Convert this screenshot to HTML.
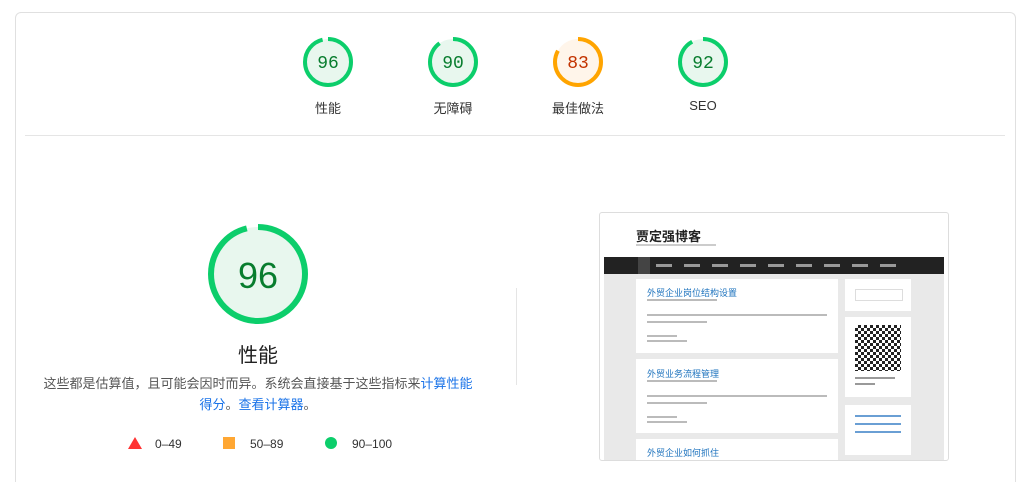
<!DOCTYPE html><html><head><meta charset="utf-8"><style>
html,body{margin:0;width:1024px;height:482px;overflow:hidden}
body{background:#fff;font-family:"Liberation Sans","Noto Sans CJK SC",sans-serif;position:relative}
.card{position:absolute;left:15px;top:12px;width:999px;height:480px;border:1px solid #e0e0e0;border-bottom:none;border-radius:6px 6px 0 0}
.lbl{position:absolute;font-size:13px;color:#333;width:100px;text-align:center}
.a{position:absolute}
.sc{position:absolute;background:#fff}
</style></head><body>
<div class="card"></div>
<svg class="a" style="left:0;top:0" width="1024" height="482">
<g font-family="Liberation Mono, monospace" font-size="18" text-anchor="middle">
<circle cx="328" cy="62" r="23" fill="#e8f7ee" stroke="#0cce6b" stroke-width="4" stroke-dasharray="138.8 144.5" transform="rotate(-90 328 62)"/>
<text x="328" y="68" fill="#087d2e">96</text>
<circle cx="453" cy="62" r="23" fill="#e8f7ee" stroke="#0cce6b" stroke-width="4" stroke-dasharray="130 144.5" transform="rotate(-90 453 62)"/>
<text x="453" y="68" fill="#087d2e">90</text>
<circle cx="578" cy="62" r="23" fill="#fff5ea" stroke="#ffa400" stroke-width="4" stroke-dasharray="120 144.5" transform="rotate(-90 578 62)"/>
<text x="578" y="68" fill="#c33300">83</text>
<circle cx="703" cy="62" r="23" fill="#e8f7ee" stroke="#0cce6b" stroke-width="4" stroke-dasharray="133 144.5" transform="rotate(-90 703 62)"/>
<text x="703" y="68" fill="#087d2e">92</text>
</g>
<line x1="25" y1="135.5" x2="1005" y2="135.5" stroke="#e5e5e5"/>
<circle cx="258" cy="274" r="47" fill="#e8f7ee" stroke="#0cce6b" stroke-width="6" stroke-dasharray="283.5 295.3" transform="rotate(-90 258 274)"/>
<text x="258" y="288" font-family="Liberation Sans, sans-serif" font-size="36" fill="#087d2e" text-anchor="middle">96</text>
<line x1="516.5" y1="288" x2="516.5" y2="385" stroke="#e5e5e5"/>
<polygon points="135,437 142,449 128,449" fill="#f33"/>
<rect x="223" y="437" width="12" height="12" fill="#ffa733"/>
<circle cx="331" cy="443" r="6" fill="#0cce6b"/>
<g font-size="12" fill="#333"><text x="155" y="448">0–49</text><text x="250" y="448">50–89</text><text x="352" y="448">90–100</text></g>
</svg>
<div class="lbl" style="left:278px;top:98px">性能</div>
<div class="lbl" style="left:403px;top:98px">无障碍</div>
<div class="lbl" style="left:528px;top:98px">最佳做法</div>
<div class="lbl" style="left:653px;top:98px">SEO</div>
<div class="a" style="left:158px;top:339px;width:200px;text-align:center;font-size:20px;color:#212121">性能</div>
<div class="a" style="left:40px;top:373px;width:436px;text-align:center;font-size:13px;line-height:21px;color:#555">这些都是估算值，且可能会因时而异。系统会直接基于这些指标来<span style="color:#1a73e8">计算性能得分</span>。<span style="color:#1a73e8">查看计算器</span>。</div>
<div class="a" style="left:599px;top:212px;width:348px;height:247px;border:1px solid #ddd;border-radius:3px;overflow:hidden;background:#fff">
 <div class="a" style="left:36px;top:13px;font-size:13px;font-weight:bold;color:#222">贾定强博客</div>
 <div class="a" style="left:36px;top:31px;width:80px;height:2px;background:#ccc"></div>
 <div class="a" style="left:4px;top:44px;width:340px;height:17px;background:#222"></div>
 <div class="a" style="left:38px;top:44px;width:12px;height:17px;background:#444"></div>
 <div class="a" style="left:56px;top:51px;width:240px;height:3px;background:repeating-linear-gradient(90deg,#999 0 16px,transparent 16px 28px)"></div>
 <div class="a" style="left:4px;top:61px;width:340px;height:190px;background:#e9e9e9"></div>
 <div class="sc" style="left:36px;top:66px;width:202px;height:74px"></div>
 <div class="a" style="left:47px;top:73px;font-size:9px;color:#1e73be">外贸企业岗位结构设置</div>
 <div class="a" style="left:47px;top:86px;width:70px;height:2px;background:#bbb"></div>
 <div class="a" style="left:47px;top:101px;width:180px;height:2px;background:#bbb"></div>
 <div class="a" style="left:47px;top:108px;width:60px;height:2px;background:#bbb"></div>
 <div class="a" style="left:47px;top:122px;width:30px;height:2px;background:#bbb"></div>
 <div class="a" style="left:47px;top:127px;width:40px;height:2px;background:#bbb"></div>
 <div class="sc" style="left:36px;top:146px;width:202px;height:74px"></div>
 <div class="a" style="left:47px;top:154px;font-size:9px;color:#1e73be">外贸业务流程管理</div>
 <div class="a" style="left:47px;top:167px;width:70px;height:2px;background:#bbb"></div>
 <div class="a" style="left:47px;top:182px;width:180px;height:2px;background:#bbb"></div>
 <div class="a" style="left:47px;top:189px;width:60px;height:2px;background:#bbb"></div>
 <div class="a" style="left:47px;top:203px;width:30px;height:2px;background:#bbb"></div>
 <div class="a" style="left:47px;top:208px;width:40px;height:2px;background:#bbb"></div>
 <div class="sc" style="left:36px;top:226px;width:202px;height:30px"></div>
 <div class="a" style="left:47px;top:233px;font-size:9px;color:#1e73be">外贸企业如何抓住</div>
 <div class="sc" style="left:245px;top:66px;width:66px;height:32px"></div>
 <div class="a" style="left:255px;top:76px;width:46px;height:10px;border:1px solid #ddd"></div>
 <div class="sc" style="left:245px;top:104px;width:66px;height:80px"></div>
 <div class="a" style="left:255px;top:112px;width:46px;height:46px;background:repeating-conic-gradient(#222 0 25%,#fff 0 50%) 0 0/6px 6px"></div>
 <div class="a" style="left:255px;top:164px;width:40px;height:2px;background:#999"></div>
 <div class="a" style="left:255px;top:170px;width:20px;height:2px;background:#999"></div>
 <div class="sc" style="left:245px;top:192px;width:66px;height:50px"></div>
 <div class="a" style="left:255px;top:202px;width:46px;height:2px;background:#6a9fd4"></div>
 <div class="a" style="left:255px;top:210px;width:46px;height:2px;background:#6a9fd4"></div>
 <div class="a" style="left:255px;top:218px;width:46px;height:2px;background:#6a9fd4"></div>
</div>
</body></html>
